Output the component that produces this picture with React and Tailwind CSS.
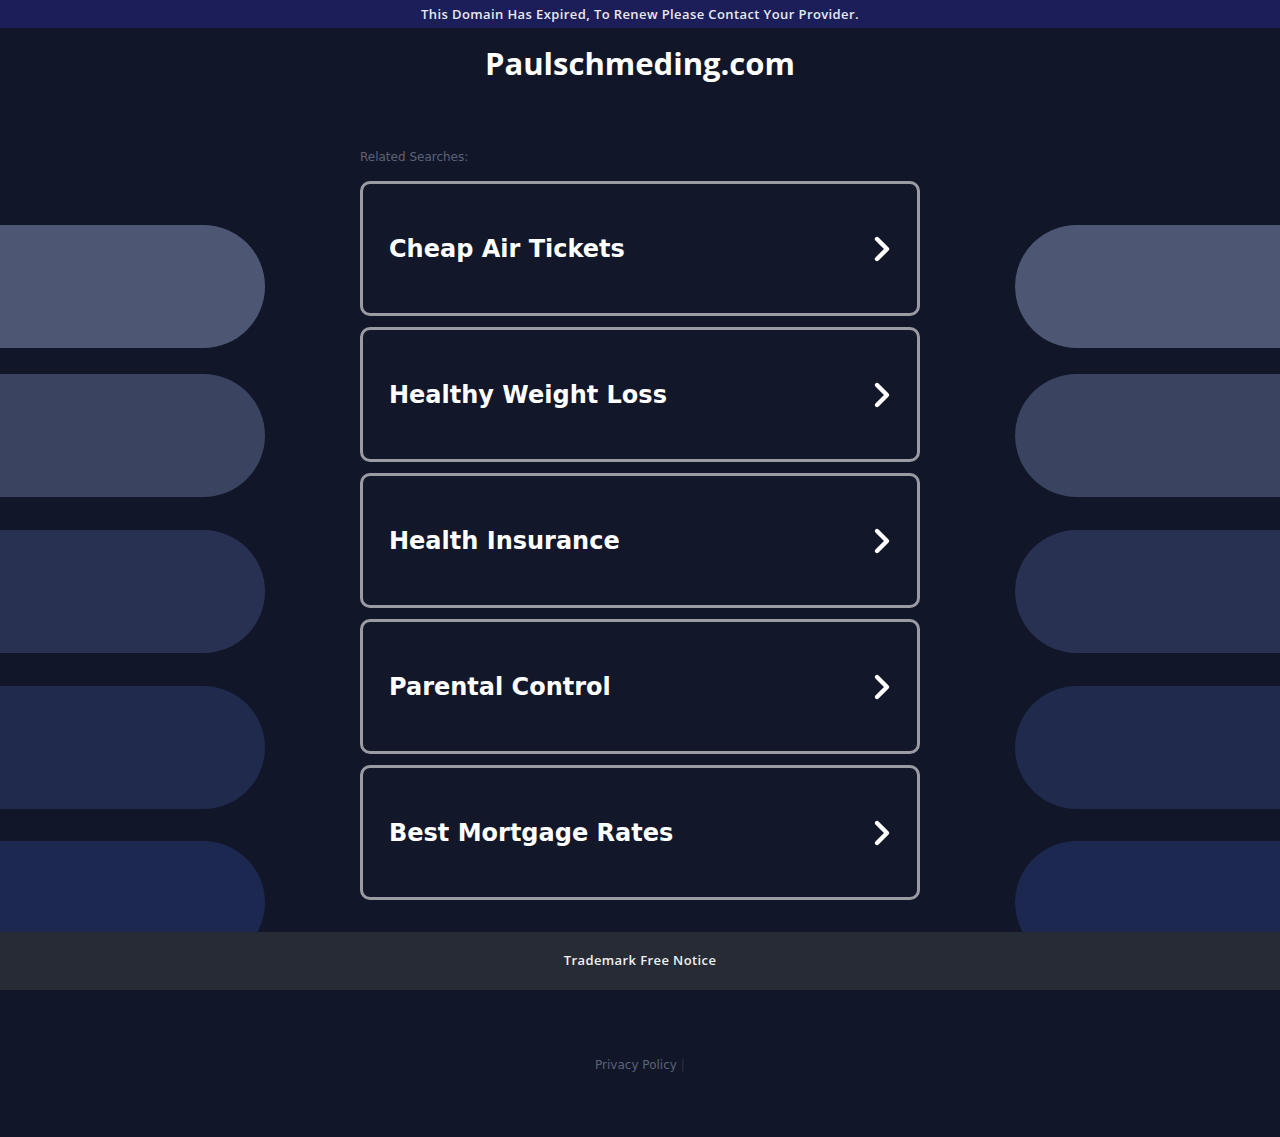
import React from "react";

const items = [
  "Cheap Air Tickets",
  "Healthy Weight Loss",
  "Health Insurance",
  "Parental Control",
  "Best Mortgage Rates",
];

const pills = [
  { mt: "mt-[197px]", bg: "bg-[#4d5774]" },
  { mt: "mt-[26px]", bg: "bg-[#3a435f]" },
  { mt: "mt-[33px]", bg: "bg-[#283152]" },
  { mt: "mt-[33px]", bg: "bg-[#1f2a4d]" },
  { mt: "mt-[32px]", bg: "bg-[#1c2850]" },
];

function Chevron() {
  return (
    <svg width="20" height="28" viewBox="0 0 20 28" className="shrink-0">
      <path
        d="M5 4 L15 14 L5 24"
        fill="none"
        stroke="#ffffff"
        strokeWidth="4.4"
        strokeLinecap="round"
        strokeLinejoin="round"
      />
    </svg>
  );
}

export default function App() {
  return (
    <div className="min-h-[1137px] bg-[#111729] text-white">
      <div className="h-[28px] bg-[#1b1e59] flex items-center justify-center pt-[1px] text-[13px] font-semibold tracking-[0.4px] text-[#e8e8f0] font-['Open_Sans',sans-serif]">
        This Domain Has Expired, To Renew Please Contact Your Provider.
      </div>

      <div className="h-[904px] overflow-hidden flex">
        <div className="w-[265px] shrink-0 flex flex-col">
          {pills.map((p, i) => (
            <div key={i} className={`${p.mt} h-[123px] w-full rounded-r-full ${p.bg} shrink-0`} />
          ))}
        </div>

        <div className="w-[560px] mx-[95px] shrink-0 flex flex-col">
          <h1 className="mt-[16px] text-center text-[31px] leading-[38px] font-bold font-['Open_Sans',sans-serif] text-white">
            Paulschmeding.com
          </h1>
          <div className="mt-[67px] text-[12px] leading-[16px] text-[#5b6378] font-['DejaVu_Sans',sans-serif]">
            Related Searches:
          </div>
          <div className="mt-[16px] flex flex-col gap-[11px]">
            {items.map((t) => (
              <div
                key={t}
                className="h-[135px] border-[3px] border-[#9b9ca3] rounded-[10px] bg-[#121729] flex items-center justify-between pl-[26px] pr-[25px]"
              >
                <span className="text-[24px] font-bold font-['DejaVu_Sans',sans-serif] text-white">
                  {t}
                </span>
                <Chevron />
              </div>
            ))}
          </div>
        </div>

        <div className="flex-1 flex flex-col">
          {pills.map((p, i) => (
            <div key={i} className={`${p.mt} h-[123px] w-full rounded-l-full ${p.bg} shrink-0`} />
          ))}
        </div>
      </div>

      <div className="h-[58px] bg-[#262b36] flex items-center justify-center text-[13px] font-semibold tracking-[0.4px] text-[#f0f0f0] font-['Open_Sans',sans-serif]">
        Trademark Free Notice
      </div>

      <div className="pt-[66px] flex justify-center text-[12px] font-['DejaVu_Sans',sans-serif] text-[#5b6378]">
        <span>Privacy Policy</span>
        <span className="ml-[4px] text-[#2e3446]">|</span>
      </div>
    </div>
  );
}
